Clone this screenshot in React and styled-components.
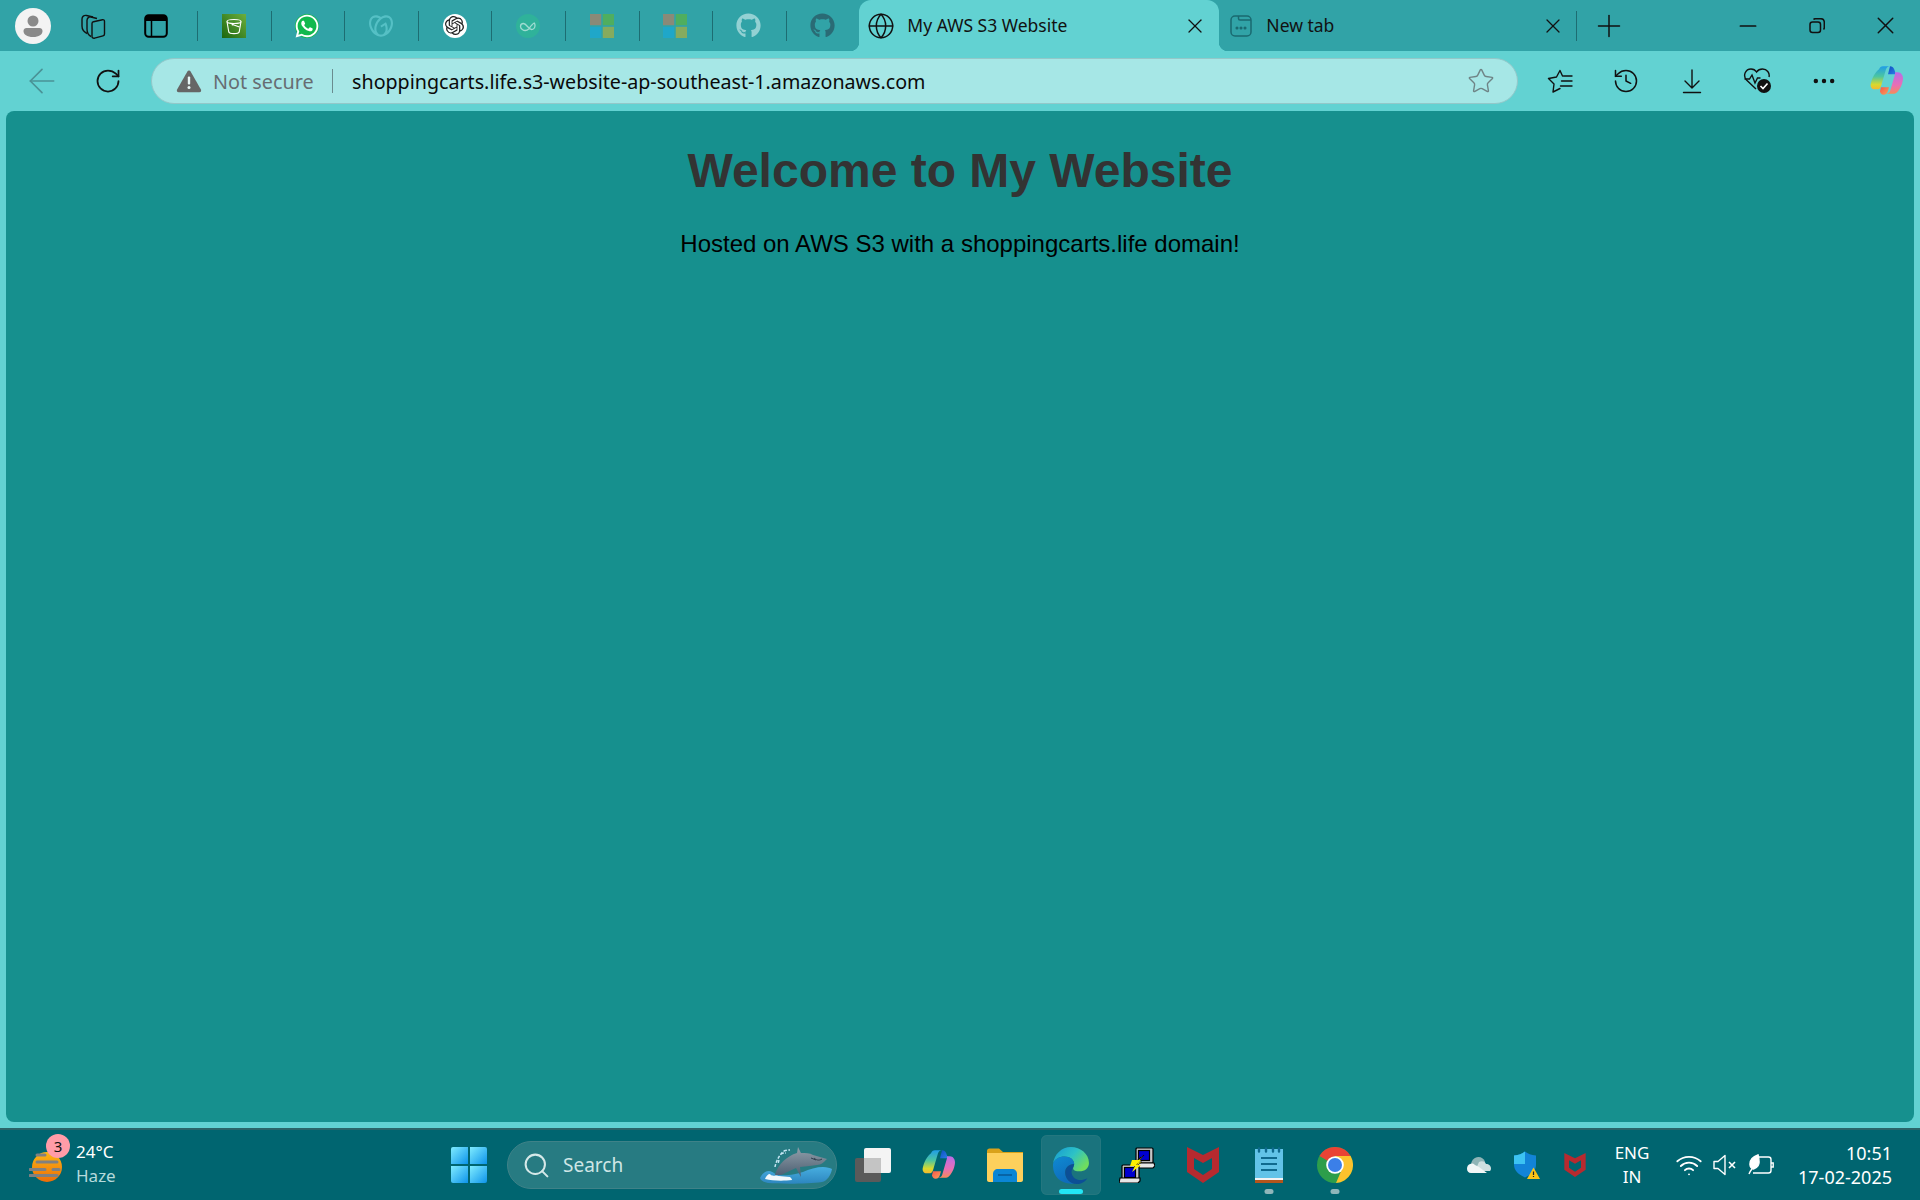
import React from "react";
import styled, { createGlobalStyle } from "styled-components";
import {
  ArrowLeft,
  Globe,
  History,
  Minus,
  MoreHorizontal,
  Plus,
  RotateCw,
  Search,
  Star,
  Wifi,
  X,
} from "lucide-react";
import { FaGithub, FaWhatsapp } from "react-icons/fa";
import { SiGodaddy, SiOpenai } from "react-icons/si";

const GlobalStyle = createGlobalStyle`
  html, body {
    margin: 0;
    padding: 0;
    background: #62d2d2;
  }
`;

const UI_FONT = `"Noto Sans", "Open Sans", sans-serif`;

const Screen = styled.div`
  width: 1920px;
  height: 1200px;
  display: flex;
  flex-direction: column;
  overflow: hidden;
  font-family: ${UI_FONT};
  background: #62d2d2;
`;

const TabStrip = styled.div`
  height: 51px;
  flex: none;
  display: flex;
  align-items: stretch;
  background: #31a3a7;
`;

const Slot = styled.div`
  flex: none;
  width: ${(p) => p.$w}px;
  display: flex;
  align-items: center;
  justify-content: center;
  color: #111;
`;

const Avatar = styled.div`
  width: 36px;
  height: 36px;
  border-radius: 50%;
  background: #f3f3f3;
  display: flex;
  align-items: center;
  justify-content: center;
`;

const PinnedTab = styled.div`
  flex: none;
  width: 73.6px;
  height: 51px;
  display: flex;
  align-items: center;
  justify-content: center;
  position: relative;
  color: ${(p) => p.$color || "#111"};
  &::before {
    content: "";
    position: absolute;
    left: 0;
    top: 11px;
    width: 1px;
    height: 30px;
    background: #1d6d72;
  }
`;

const Favicon = styled.div`
  width: 24px;
  height: 24px;
  display: flex;
  align-items: center;
  justify-content: center;
  border-radius: ${(p) => (p.$round ? "50%" : "0")};
  background: ${(p) => p.$bg || "transparent"};
`;

const ActiveTab = styled.div`
  flex: none;
  width: 360px;
  position: relative;
  background: #62d2d2;
  border-radius: 12px 12px 0 0;
  display: flex;
  align-items: center;
  padding: 0 12px 0 8px;
  box-sizing: border-box;
  &::before,
  &::after {
    content: "";
    position: absolute;
    bottom: 0;
    width: 9px;
    height: 9px;
  }
  &::before {
    left: -9px;
    background: radial-gradient(circle at 0 0, transparent 9px, #62d2d2 9.5px);
  }
  &::after {
    right: -9px;
    background: radial-gradient(circle at 100% 0, transparent 9px, #62d2d2 9.5px);
  }
`;

const InactiveTab = styled.div`
  flex: none;
  width: 357px;
  display: flex;
  align-items: center;
  padding: 0 11px 0 11px;
  box-sizing: border-box;
`;

const TabTitle = styled.span`
  flex: 1;
  margin-left: ${(p) => p.$gap}px;
  font-size: 17.5px;
  line-height: 24px;
  margin-top: -1px;
  color: #111;
  white-space: nowrap;
`;

const TabDivider = styled.div`
  flex: none;
  width: 1px;
  height: 30px;
  align-self: center;
  background: #1d6d72;
`;

const WindowControls = styled.div`
  margin-left: auto;
  display: flex;
  align-items: center;
  flex: none;
`;

const Toolbar = styled.div`
  height: 60px;
  flex: none;
  display: flex;
  align-items: center;
  background: #62d2d2;
`;

const AddressBar = styled.div`
  flex: none;
  width: 1367px;
  height: 46px;
  box-sizing: border-box;
  border: 1.5px solid #93c8c9;
  border-radius: 23px;
  background: #a6e7e6;
  display: flex;
  align-items: center;
  padding: 0 22px 0 24px;
`;

const NotSecure = styled.span`
  margin-left: 11px;
  font-size: 19.8px;
  color: #666d72;
  white-space: nowrap;
`;

const AddressDivider = styled.div`
  width: 1.5px;
  height: 24px;
  margin: 0 19px 0 18px;
  background: #6a8c8f;
`;

const Url = styled.span`
  flex: 1;
  font-size: 19.66px;
  color: #0a0a0a;
  white-space: nowrap;
`;

const Page = styled.main`
  flex: 1;
  margin: 0 6px;
  border-radius: 8px;
  background: #16908e;
  overflow: hidden;
  text-align: center;
  font-family: "Liberation Sans", Arial, sans-serif;
`;

const Heading = styled.h1`
  margin: 32px 0;
  font-size: 48px;
  font-weight: 700;
  color: #333;
`;

const Tagline = styled.p`
  margin: 0;
  font-size: 24px;
  color: #000;
`;

const BottomGap = styled.div`
  height: 6px;
  flex: none;
`;

const Taskbar = styled.footer`
  height: 72px;
  flex: none;
  box-sizing: border-box;
  border-top: 2px solid #2b6569;
  background: #006570;
  display: flex;
  align-items: center;
  color: #fff;
`;

const Weather = styled.div`
  flex: none;
  width: 439px;
  display: flex;
  align-items: center;
  padding-left: 29px;
  box-sizing: border-box;
`;

const WeatherIcon = styled.div`
  position: relative;
  width: 36px;
  height: 36px;
  margin-top: 6px;
  display: flex;
`;

const Badge = styled.span`
  position: absolute;
  left: 17px;
  top: -16px;
  width: 24px;
  height: 24px;
  border-radius: 50%;
  background: #ff9ca8;
  color: #111;
  font-size: 15px;
  line-height: 24px;
  text-align: center;
`;

const WeatherText = styled.div`
  margin: -2px 0 0 11px;
  display: flex;
  flex-direction: column;
  font-size: 17px;
  line-height: 24px;
`;

const Muted = styled.span`
  color: #b5dadc;
`;

const SearchBox = styled.div`
  flex: none;
  width: 330px;
  height: 48px;
  margin: 0 3px 0 8px;
  box-sizing: border-box;
  border: 1px solid #3f8288;
  border-radius: 24px;
  background: #277b82;
  display: flex;
  align-items: center;
  padding: 0 4px 0 14px;
  overflow: hidden;
`;

const SearchLabel = styled.span`
  flex: 1;
  margin-left: 12px;
  font-size: 19px;
  color: #cfe6e6;
`;

const TaskSlot = styled.div`
  position: relative;
  flex: none;
  width: 60px;
  height: 60px;
  margin: 0 3px;
  border-radius: 6px;
  display: flex;
  align-items: center;
  justify-content: center;
  background: ${(p) => (p.$active ? "#1a737d" : "transparent")};
  box-shadow: ${(p) => (p.$active ? "inset 0 0 0 1px #24777f" : "none")};
`;

const RunDot = styled.span`
  position: absolute;
  bottom: 1px;
  left: 50%;
  transform: translateX(-50%);
  width: ${(p) => (p.$active ? 24 : 9)}px;
  height: 5px;
  border-radius: 3px;
  background: ${(p) => (p.$active ? "#22e6f5" : "#8fb6ba")};
`;

const Tray = styled.div`
  margin-left: auto;
  display: flex;
  align-items: center;
  padding-right: 28px;
`;

const TraySlot = styled.div`
  flex: none;
  width: ${(p) => p.$w}px;
  display: flex;
  align-items: center;
  justify-content: center;
  color: #fff;
`;

const Lang = styled.div`
  flex: none;
  width: 66px;
  margin-right: 6px;
  text-align: center;
  font-size: 17px;
  line-height: 24px;
`;

const Clock = styled.div`
  flex: none;
  width: 113px;
  text-align: right;
  font-size: 18px;
  line-height: 24px;
  white-space: nowrap;
`;

function CollectionsIcon() {
  return (
    <svg width="26" height="26" viewBox="0 0 26 26" fill="none" stroke="#111" strokeWidth="1.4" strokeLinejoin="round">
      <path d="M7 20.500C4 19 2 16 2 13V6c0-2.500 2-4 4.500-3.500L13 4" />
      <path d="M11 23.500C8 22 7 19 7 16V7.500C7 5 9 3.500 11 4l6 1.500" />
      <path d="M12 10.500c0-1 .5-1.600 1.500-1.800l9-2c1.200-.2 2 .5 2 1.700v12.600c0 1-.5 1.600-1.500 1.800l-8.500 2.400c-1.300.3-2.500-.5-2.500-1.800z" />
    </svg>
  );
}

function VerticalTabsIcon() {
  return (
    <svg width="24" height="24" viewBox="0 0 24 24" fill="none">
      <rect x="1.200" y="1.200" width="21.600" height="21.600" rx="3.500" stroke="#000" strokeWidth="2" />
      <path d="M1 5c0-2.500 1.500-4 4-4h14c2.500 0 4 1.500 4 4v2H1z" fill="#000" />
      <path d="M7.500 7v15" stroke="#000" strokeWidth="1.500" />
    </svg>
  );
}

function BucketFavicon() {
  return (
    <svg width="24" height="24" viewBox="0 0 24 24">
      <defs>
        <linearGradient id="s3bg" x1="0" y1="1" x2="1" y2="0">
          <stop offset="0" stopColor="#1b660f" />
          <stop offset="1" stopColor="#6cae3e" />
        </linearGradient>
      </defs>
      <rect width="24" height="24" fill="url(#s3bg)" />
      <g fill="none" stroke="#fff" strokeWidth="1.100">
        <ellipse cx="12" cy="7.500" rx="7" ry="2" />
        <path d="M5 7.500 6.800 18c.3 1 2.500 1.600 5.200 1.600s4.900-.6 5.200-1.600L19 7.500" />
        <path d="M10.500 10.500l7 2.500" />
      </g>
      <circle cx="10.500" cy="10.500" r="1" fill="#fff" />
    </svg>
  );
}

function LoopFavicon() {
  return (
    <svg width="24" height="24" viewBox="0 0 24 24" fill="none">
      <circle cx="12" cy="12" r="12" fill="#2fb29a" />
      <path d="M4.500 12.500c0-2 1.500-3 3-3 3 0 5 6 8 6 2 0 3.500-2 3.500-4 0-1-.3-2-.8-2.500-2 1-4 4-5.500 6-1 1-2 1.500-3.500 1.500s-4.700-1.500-4.700-4z" stroke="#9fdcd2" strokeWidth="1.300" />
    </svg>
  );
}

function TilesFavicon() {
  return (
    <svg width="24" height="24" viewBox="0 0 24 24">
      <rect width="11.200" height="11.200" fill="#8a8a78" />
      <rect x="12.800" width="11.200" height="11.200" fill="#4fae5f" />
      <rect y="12.800" width="11.200" height="11.200" fill="#1fa7c9" />
      <rect x="12.800" y="12.800" width="11.200" height="11.200" fill="#86ab5e" />
    </svg>
  );
}

function NewTabIcon() {
  return (
    <svg width="22" height="22" viewBox="0 0 22 22" fill="none" stroke="#1a6a70" strokeWidth="1.500">
      <rect x="1" y="1" width="20" height="20" rx="4" />
      <path d="M8.500 1v2.500c0 1 .6 1.500 1.500 1.500h11" />
      <circle cx="7" cy="13" r=".8" fill="#1a6a70" />
      <circle cx="11" cy="13" r=".8" fill="#1a6a70" />
      <circle cx="15" cy="13" r=".8" fill="#1a6a70" />
    </svg>
  );
}

function RestoreIcon() {
  return (
    <svg width="16" height="16" viewBox="0 0 16 16" fill="none" stroke="#111" strokeWidth="1.500">
      <rect x="1" y="4" width="10.500" height="10.500" rx="2.500" />
      <path d="M4.500 1.500c.5-.5 1-.8 2-.8h5c2.400 0 3.800 1.400 3.800 3.800v5c0 1-.3 1.500-.8 2" />
    </svg>
  );
}

function WarningIcon() {
  return (
    <svg width="26" height="24" viewBox="0 0 26 24">
      <path d="M13 1.500c.7 0 1.200.4 1.600 1l10.300 18c.7 1.300-.1 2.800-1.500 2.800H2.600c-1.400 0-2.200-1.500-1.500-2.800l10.300-18c.4-.6.900-1 1.600-1z" fill="#666" />
      <rect x="11.800" y="7.500" width="2.400" height="8" rx="1" fill="#e7f6f6" />
      <circle cx="13" cy="18.500" r="1.500" fill="#e7f6f6" />
    </svg>
  );
}

function FavoritesIcon() {
  return (
    <svg width="26" height="26" viewBox="0 0 26 26" fill="none" stroke="#111" strokeWidth="1.400" strokeLinejoin="round" strokeLinecap="round">
      <path d="M15.500 8 13 2.500 9.500 9l-8 1.500L7 16l-1 8 7-3.500" />
      <path d="M16.500 8H25M14.500 13H25M13.500 18H25" />
    </svg>
  );
}

function DownloadIcon() {
  return (
    <svg width="26" height="26" viewBox="0 0 26 26" fill="none" stroke="#111" strokeWidth="1.400" strokeLinecap="round" strokeLinejoin="round">
      <path d="M13 2v18M6 13l7 7 7-7M4.500 24.500h17" />
    </svg>
  );
}

function HealthIcon() {
  return (
    <svg width="30" height="28" viewBox="0 0 30 28" fill="none">
      <path d="M13 22 3.500 13C-.5 8.500 2.500 2 8 2c2.500 0 4.300 1 5.500 3 1.500-2 3.500-3 6-3 4.500 0 7.500 4 6.500 8" stroke="#111" strokeWidth="1.400" />
      <path d="M1.500 12h5l2.500-4 3 8 2.500-5h3" stroke="#111" strokeWidth="1.400" />
      <circle cx="21" cy="19" r="7" fill="#111" />
      <path d="M17.500 19l2.500 2.500 4.500-5" stroke="#fff" strokeWidth="1.600" />
    </svg>
  );
}

function CopilotIcon({ size = 34, id = "cp" }) {
  return (
    <svg width={size} height={size * 0.92} viewBox="0 0 34 31" fill="none">
      <defs>
        <linearGradient id={`${id}a`} x1="0" y1="0" x2="0" y2="1">
          <stop offset="0" stopColor="#1f9ce8" />
          <stop offset=".45" stopColor="#4cc6a0" />
          <stop offset=".8" stopColor="#d8d92e" />
          <stop offset="1" stopColor="#f3b92f" />
        </linearGradient>
        <linearGradient id={`${id}b`} x1="0" y1="0" x2="0" y2="1">
          <stop offset="0" stopColor="#b76de8" />
          <stop offset=".6" stopColor="#e86fb5" />
          <stop offset="1" stopColor="#f58a5b" />
        </linearGradient>
        <linearGradient id={`${id}c`} x1="0" y1="0" x2="1" y2="1">
          <stop offset="0" stopColor="#0f4fc0" />
          <stop offset="1" stopColor="#2a7fe8" />
        </linearGradient>
        <linearGradient id={`${id}d`} x1="0" y1="0" x2="1" y2="1">
          <stop offset="0" stopColor="#f7564a" />
          <stop offset="1" stopColor="#f9a05a" />
        </linearGradient>
      </defs>
      <path d="M20 1c2 0 3.500 1 4.200 3.200L26 9h-8z" fill={`url(#${id}c)`} />
      <path d="M9 4c.8-2 2-3 4-3h7c-2 0-3.200 1-4 3.200L11 21c-.8 2.500-2 3-4 3H4.500C2 24 0 22 .8 18.500 2 13 5 7 9 4z" fill={`url(#${id}a)`} />
      <path d="M25 7h3c3 0 5 3 5 6 0 4-2.500 11-6 14-1 1-2.500 1.500-4 1.500h-7c2 0 3.400-.8 4.200-3L25 9z" fill={`url(#${id}b)`} />
      <path d="M11 22h8l-1 3.500c-.8 2.500-2 4-4.500 4-2 0-3-1.500-3.500-3.500z" fill={`url(#${id}d)`} />
    </svg>
  );
}

function HazeIcon() {
  return (
    <svg width="36" height="36" viewBox="0 0 36 36">
      <defs>
        <linearGradient id="sun" x1="0" y1="0" x2="0" y2="1">
          <stop offset="0" stopColor="#fcb714" />
          <stop offset="1" stopColor="#ec6d08" />
        </linearGradient>
      </defs>
      <circle cx="18" cy="17" r="15" fill="url(#sun)" />
      <g stroke="#808080" strokeWidth="3" strokeLinecap="round">
        <path d="M8 5h8" />
        <path d="M8 12h20" />
        <path d="M1 19.500h15M24 19.500h6" />
        <path d="M1 25.500h27" />
      </g>
    </svg>
  );
}

function WindowsLogo() {
  return (
    <svg width="36" height="36" viewBox="0 0 36 36">
      <defs>
        <linearGradient id="win" x1="0" y1="0" x2="1" y2="1">
          <stop offset="0" stopColor="#7fecff" />
          <stop offset="1" stopColor="#0d93ea" />
        </linearGradient>
      </defs>
      <path d="M2 0h15v17H0V2a2 2 0 0 1 2-2z" fill="url(#win)" />
      <path d="M19 0h15a2 2 0 0 1 2 2v15H19z" fill="url(#win)" />
      <path d="M0 19h17v17H2a2 2 0 0 1-2-2z" fill="url(#win)" />
      <path d="M19 19h17v15a2 2 0 0 1-2 2H19z" fill="url(#win)" />
    </svg>
  );
}

function WhaleIcon() {
  return (
    <svg width="72" height="38" viewBox="0 0 72 38" fill="none">
      <defs>
        <linearGradient id="whale" x1="0" y1="0" x2="0" y2="1">
          <stop offset="0" stopColor="#93a0ab" />
          <stop offset="1" stopColor="#4a5d70" />
        </linearGradient>
        <linearGradient id="sea" x1="0" y1="0" x2="0" y2="1">
          <stop offset="0" stopColor="#47aee0" />
          <stop offset="1" stopColor="#2d86bf" />
        </linearGradient>
      </defs>
      <path d="M0 32c2-4 5-7 9-7 4 0 6 4 10 4 8 1 18-1 24-3 6-3 14-5 20-5 4 0 7 1 9 2-1 6-5 12-10 13-14 2-40 2-54 1-4-1-7-2-8-5z" fill="url(#sea)" />
      <path d="M15 29C18 18 27 10 37 7L38 1l3 6c4 0 9 0 12 2l14 4c-3 3-6 6-10 6-5 1-10 1-17 2l1 10-5-9c-5 2-10 5-15 7z" fill="url(#whale)" />
      <path d="M51 12l5 2M62 13c-3 2-6 1-8-1" stroke="#2f3d4c" strokeWidth="1" />
      <path d="M5 33c1-3 3-5 5-5 1 2 3 1 4 2 2-1 4 0 5 0 3 0 7 1 11 1 1 1 2 2 2 3-8 1-19 1-27-1z" fill="#f1f8fb" />
      <path d="M15 21c1-6 5-13 9-16M24 5c2-1 4-1 6-1M19 14l-1 4M21 8c2-1 3-1 5-1" stroke="#c5e6f3" strokeWidth="1.500" strokeDasharray="3 1.500" />
    </svg>
  );
}

function TaskViewIcon() {
  return (
    <svg width="36" height="34" viewBox="0 0 36 34">
      <rect x="0" y="10" width="26" height="24" rx="2" fill="#5a5a5a" />
      <rect x="9" y="0" width="27" height="25" rx="2" fill="#f4f4f4" />
      <rect x="9" y="10" width="17" height="15" fill="#c4c4c4" />
    </svg>
  );
}

function ExplorerIcon() {
  return (
    <svg width="36" height="34" viewBox="0 0 36 34">
      <path d="M0 3c0-1.500 1-2.500 2.500-2.500H12L16 4H36v6H0z" fill="#d9a21a" />
      <path d="M0 5h36v27c0 1-1 2-2 2H2c-1 0-2-1-2-2z" fill="#fdd05c" />
      <path d="M6 22h24v12H6z" fill="#fdd05c" />
      <path d="M6 26c0-3 2-5 5-5h14c3 0 5 2 5 5v8H6z" fill="#0b86d6" />
      <path d="M11 27h14" stroke="#075c9a" strokeWidth="1.600" />
    </svg>
  );
}

function EdgeIcon() {
  return (
    <svg width="38" height="38" viewBox="0 0 36 36">
      <defs>
        <linearGradient id="edgeTop" x1="0" y1="0" x2="1" y2=".6">
          <stop offset="0" stopColor="#1598d4" />
          <stop offset=".55" stopColor="#2dc2c6" />
          <stop offset="1" stopColor="#6fdd5e" />
        </linearGradient>
        <linearGradient id="edgeLeft" x1="0" y1="0" x2=".4" y2="1">
          <stop offset="0" stopColor="#0f8ad2" />
          <stop offset="1" stopColor="#0e6cbc" />
        </linearGradient>
      </defs>
      <path d="M1 17C2 8 9 1 18 1c9 0 17 6.500 17 15 0 5-4 8-9 8-3 0-6-1-6-3 0-1 1-2 1-4 0-4-4-7-9-7-5 0-10 2.500-11 7z" fill="url(#edgeTop)" />
      <path d="M1 17c1-4.500 6-7 11-7 5 0 9 3 9 7-5 0-8.500 3.500-8.500 8 0 5 3 9 8.500 10.500C9 37 0 29 1 17z" fill="url(#edgeLeft)" />
      <path d="M21 17c-5 0-8.500 3.500-8.500 8 0 6 5 11 11 11 4 0 8-2 10-5.500-4 2-9 2.500-12 0-3-2.500-3.500-6-2.500-8 .6-1.500 1.500-2.500 2-5.500z" fill="#0c4f96" />
    </svg>
  );
}

function PuttyIcon() {
  return (
    <svg width="36" height="36" viewBox="0 0 36 36">
      <g stroke="#000" strokeWidth="1.200">
        <rect x="17" y="1" width="17" height="15" rx="1" fill="#c6c6c6" />
        <rect x="19.500" y="3.500" width="11" height="10" fill="#0000d0" />
        <path d="M16 16h19l1 3-2 2H17z" fill="#e6e6e6" />
        <rect x="3" y="19" width="17" height="15" rx="1" fill="#c6c6c6" transform="translate(0 -1)" />
        <rect x="5.500" y="20.500" width="11" height="10" fill="#0000d0" />
        <path d="M1 31h20v3l-2 2H0z" fill="#e6e6e6" />
      </g>
      <path d="M25 8l-6 7h4l-9 6 5-5h-4l7-6-5 5 8-7z" fill="#ffef00" stroke="#000" strokeWidth=".600" />
      <path d="M13 13h9l-5 5h5l-9 7 3-6h-5z" fill="#ffef00" />
    </svg>
  );
}

function McAfeeIcon({ width = 32, height = 36 }) {
  return (
    <svg width={width} height={height} viewBox="0 0 32 36">
      <path d="M0 0l16 8 16-8v25L16 36 0 25z" fill="#b72a2f" />
      <path d="M7 11l9 5 9-5v11l-9 6-9-6z" fill="#006570" />
    </svg>
  );
}

function NotepadIcon() {
  return (
    <svg width="28" height="36" viewBox="0 0 28 36">
      <rect x="0" y="2" width="28" height="33" fill="#62c3e8" />
      <path d="M0 31h28v3H0z" fill="#f2f2f2" />
      <path d="M0 33h28v3H0z" fill="#b2551c" />
      <g stroke="#0f6a8f" strokeWidth="2.400" strokeLinecap="round">
        <path d="M4 1.500v3M11 1.500v3M18 1.500v3M24 1.500v3" />
      </g>
      <path d="M6 11h16M6 17h16M6 23h16" stroke="#0f6a8f" strokeWidth="2" />
    </svg>
  );
}

function ChromeIcon() {
  return (
    <svg width="36" height="36" viewBox="0 0 36 36">
      <circle cx="18" cy="18" r="18" fill="#2d9e4b" />
      <path d="M2.400 9A18 18 0 0 1 33.600 9H18L11 14z" fill="#e94335" />
      <path d="M33.600 9A18 18 0 0 1 19 36L25 22 18 9z" fill="#fcc22d" />
      <circle cx="18" cy="18" r="8.800" fill="#fff" />
      <circle cx="18" cy="18" r="7" fill="#3b7fe8" />
    </svg>
  );
}

function CloudIcon() {
  return (
    <svg width="24" height="18" viewBox="0 0 24 18">
      <path d="M4 9c0-4 3-8 7.500-8 3 0 5 1.500 6.500 4.500V10H6z" fill="#8fb4b6" />
      <path d="M12 6c2.500-1.500 6-1 7 2 3 0 5 2 5 4.500 0 1-.4 2-1 2.500H8z" fill="#cfe0e0" />
      <path d="M3 8c2-1 4-.5 5 1l4 2 8 6H4c-2.500 0-4-1.700-4-4.200C0 10.500 1 8.700 3 8z" fill="#f1f6f6" />
    </svg>
  );
}

function DefenderIcon() {
  return (
    <svg width="26" height="28" viewBox="0 0 26 28">
      <path d="M11 .500c3 2.500 6 3.500 11 4v9c0 6-4 10-11 13C4.500 23.500 0 19.500 0 13.500v-9c5-.5 8-1.500 11-4z" fill="#1284d8" />
      <path d="M11 .500c-3 2.500-6 3.500-11 4v8.500h11z" fill="#3cc3f2" />
      <path d="M13 28l6.500-11.500L26 28z" fill="#fcc419" />
      <path d="M19.500 20.500v3.500M19.500 25v1" stroke="#222" strokeWidth="1.200" />
    </svg>
  );
}

function MutedSpeakerIcon() {
  return (
    <svg width="24" height="22" viewBox="0 0 24 22" fill="none" stroke="#fff" strokeWidth="1.400" strokeLinejoin="round">
      <path d="M1 7.500h4l7-6v19l-7-6H1z" />
      <path d="M16 8l6 6M22 8l-6 6" strokeWidth="1.600" />
    </svg>
  );
}

function LeafBatteryIcon() {
  return (
    <svg width="26" height="22" viewBox="0 0 26 22" fill="none" stroke="#fff" strokeWidth="1.400">
      <path d="M9 3h11.500c1.500 0 2.500 1 2.500 2.500v11c0 1.500-1 2.500-2.500 2.500H5" />
      <path d="M23 9h2.200v4H23" />
      <path d="M10 .800C5 2.500 1.500 6 2 11c.2 2 1.500 3.500 3.500 4 4-1 6-4.500 5.500-8 0-2.500-.5-4.500-1-6.200z" fill="#fff" />
      <path d="M1 20c1-3 3-5 5-8" />
    </svg>
  );
}

export default function App() {
  return (
    <>
      <GlobalStyle />
      <Screen>
        <TabStrip>
          <Slot $w={66}>
            <Avatar>
              <svg width="26" height="26" viewBox="0 0 26 26" fill="#8a8a8a">
                <circle cx="13" cy="8" r="5.500" />
                <path d="M3.500 18c0-2 1.500-3 3-3h13c1.500 0 3 1 3 3 0 3.500-3.500 6-9.500 6s-9.500-2.500-9.500-6z" />
              </svg>
            </Avatar>
          </Slot>
          <Slot $w={54}>
            <CollectionsIcon />
          </Slot>
          <Slot $w={72}>
            <VerticalTabsIcon />
          </Slot>
          <Slot $w={5} />
          <PinnedTab>
            <Favicon>
              <BucketFavicon />
            </Favicon>
          </PinnedTab>
          <PinnedTab>
            <Favicon $round $bg="#12b94e">
              <FaWhatsapp size={26} color="#fff" />
            </Favicon>
          </PinnedTab>
          <PinnedTab $color="#55c0c5">
            <SiGodaddy size={24} />
          </PinnedTab>
          <PinnedTab>
            <Favicon $round $bg="#fff">
              <SiOpenai size={19} color="#222" />
            </Favicon>
          </PinnedTab>
          <PinnedTab>
            <LoopFavicon />
          </PinnedTab>
          <PinnedTab>
            <TilesFavicon />
          </PinnedTab>
          <PinnedTab>
            <TilesFavicon />
          </PinnedTab>
          <PinnedTab $color="#93d1d3">
            <FaGithub size={25} />
          </PinnedTab>
          <PinnedTab $color="#2a6b75">
            <FaGithub size={25} />
          </PinnedTab>
          <ActiveTab>
            <Globe size={28} color="#111" strokeWidth={1.3} />
            <TabTitle $gap={12}>My AWS S3 Website</TabTitle>
            <X size={24} color="#111" strokeWidth={1.3} />
          </ActiveTab>
          <InactiveTab>
            <NewTabIcon />
            <TabTitle $gap={14}>New tab</TabTitle>
            <X size={24} color="#111" strokeWidth={1.3} />
          </InactiveTab>
          <TabDivider />
          <Slot $w={64}>
            <Plus size={36} strokeWidth={1} />
          </Slot>
          <WindowControls>
            <Slot $w={69}>
              <Minus size={26} strokeWidth={1.6} />
            </Slot>
            <Slot $w={69}>
              <RestoreIcon />
            </Slot>
            <Slot $w={69}>
              <X size={29} strokeWidth={1.2} />
            </Slot>
          </WindowControls>
        </TabStrip>

        <Toolbar>
          <Slot $w={84}>
            <ArrowLeft size={40} color="#4a9296" strokeWidth={1} />
          </Slot>
          <Slot $w={48}>
            <RotateCw size={28} color="#111" strokeWidth={1.5} />
          </Slot>
          <Slot $w={19} />
          <AddressBar>
            <WarningIcon />
            <NotSecure>Not secure</NotSecure>
            <AddressDivider />
            <Url>shoppingcarts.life.s3-website-ap-southeast-1.amazonaws.com</Url>
            <Star size={28} color="#6f8486" strokeWidth={1.2} />
          </AddressBar>
          <Slot $w={9} />
          <Slot $w={66}>
            <FavoritesIcon />
          </Slot>
          <Slot $w={66}>
            <History size={28} strokeWidth={1.3} />
          </Slot>
          <Slot $w={66}>
            <DownloadIcon />
          </Slot>
          <Slot $w={66}>
            <HealthIcon />
          </Slot>
          <Slot $w={66}>
            <MoreHorizontal size={28} strokeWidth={1.8} />
          </Slot>
          <Slot $w={60}>
            <CopilotIcon id="cpTop" />
          </Slot>
        </Toolbar>

        <Page>
          <Heading>Welcome to My Website</Heading>
          <Tagline>Hosted on AWS S3 with a shoppingcarts.life domain!</Tagline>
        </Page>
        <BottomGap />

        <Taskbar>
          <Weather>
            <WeatherIcon>
              <HazeIcon />
              <Badge>3</Badge>
            </WeatherIcon>
            <WeatherText>
              <span>24°C</span>
              <Muted>Haze</Muted>
            </WeatherText>
          </Weather>
          <Slot $w={60}>
            <WindowsLogo />
          </Slot>
          <SearchBox>
            <Search size={29} color="#d5e8e8" strokeWidth={1.7} />
            <SearchLabel>Search</SearchLabel>
            <WhaleIcon />
          </SearchBox>
          <TaskSlot>
            <TaskViewIcon />
          </TaskSlot>
          <TaskSlot>
            <CopilotIcon id="cpBar" />
          </TaskSlot>
          <TaskSlot>
            <ExplorerIcon />
          </TaskSlot>
          <TaskSlot $active>
            <EdgeIcon />
            <RunDot $active />
          </TaskSlot>
          <TaskSlot>
            <PuttyIcon />
          </TaskSlot>
          <TaskSlot>
            <McAfeeIcon />
          </TaskSlot>
          <TaskSlot>
            <NotepadIcon />
            <RunDot />
          </TaskSlot>
          <TaskSlot>
            <ChromeIcon />
            <RunDot />
          </TaskSlot>
          <Tray>
            <TraySlot $w={48}>
              <CloudIcon />
            </TraySlot>
            <TraySlot $w={48}>
              <DefenderIcon />
            </TraySlot>
            <TraySlot $w={48}>
              <McAfeeIcon width={22} height={24} />
            </TraySlot>
            <Lang>
              ENG
              <br />
              IN
            </Lang>
            <TraySlot $w={36}>
              <Wifi size={28} strokeWidth={1.6} />
            </TraySlot>
            <TraySlot $w={36}>
              <MutedSpeakerIcon />
            </TraySlot>
            <TraySlot $w={36}>
              <LeafBatteryIcon />
            </TraySlot>
            <Clock>
              10:51
              <br />
              17-02-2025
            </Clock>
          </Tray>
        </Taskbar>
      </Screen>
    </>
  );
}
